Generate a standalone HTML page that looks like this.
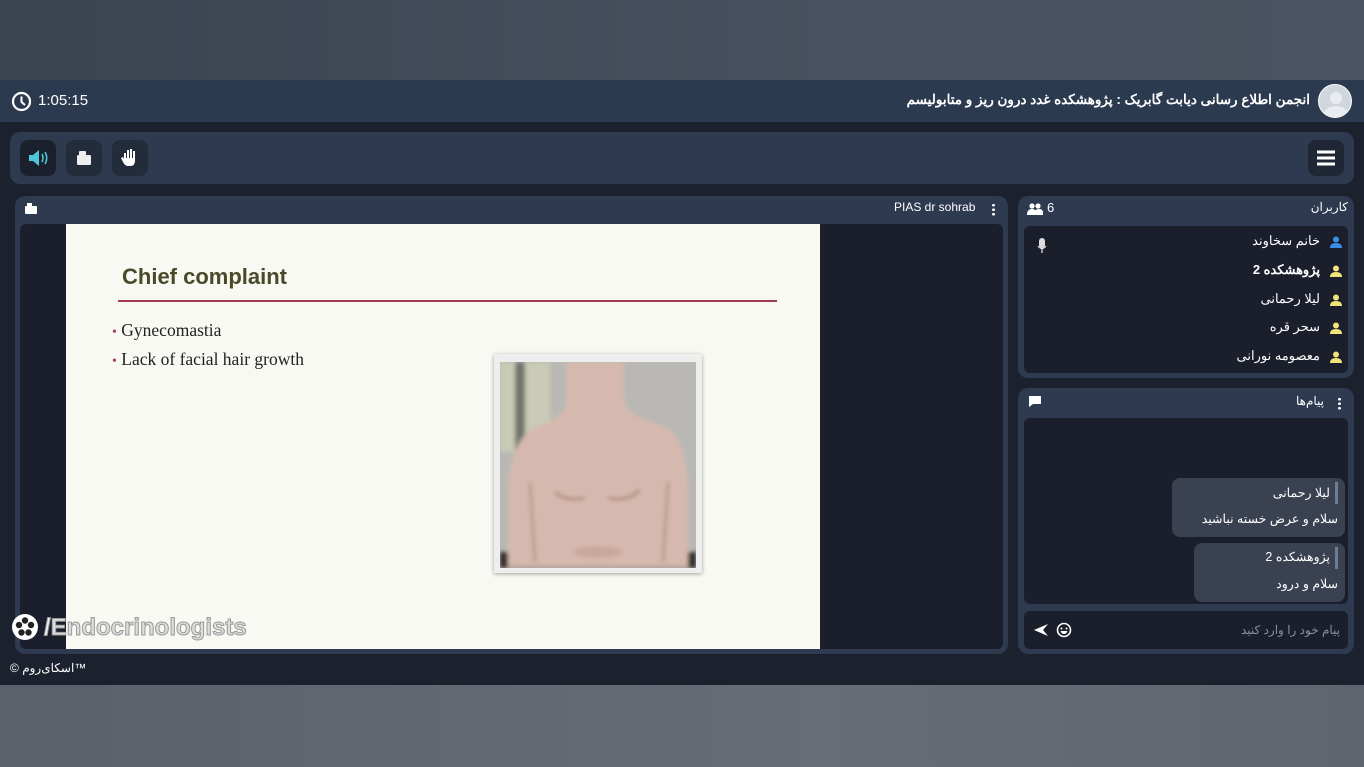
<!DOCTYPE html>
<html><head><meta charset="utf-8"><style>
*{margin:0;padding:0;box-sizing:border-box}
body{width:1364px;height:767px;overflow:hidden;background:#1b212d;font-family:"Liberation Sans","Noto Sans CJK SC",sans-serif;position:relative;color:#fff}
.a{position:absolute}
.top{left:0;top:0;width:1364px;height:80px;background:linear-gradient(90deg,#3a4350,#48515f 60%,#4a5361)}
.bot{left:0;top:685px;width:1364px;height:82px;background:linear-gradient(90deg,#5b616b,#676c75 60%,#5f656e)}
.hdr{left:0;top:80px;width:1364px;height:42px;background:#2c3a50}
.panel{background:#2d3a50;border-radius:10px}
.inner{background:#1a1f2b;border-radius:6px}
.btn{width:36px;height:36px;border-radius:8px;background:#232c3b;top:140px}
.rtl{direction:rtl;text-align:right}
.u{font-size:13px;right:44px}
.ui{right:22px;width:12px;height:12px}
.bub{background:#3a4150;border-radius:8px;direction:rtl}
</style></head><body>
<div class="a top"></div>
<div class="a bot"></div>
<div class="a hdr"></div>
<svg class="a" style="left:11px;top:91px" width="21" height="21" viewBox="0 0 21 21"><circle cx="10.5" cy="10.5" r="8.5" fill="none" stroke="#fff" stroke-width="2.2"/><path d="M10.5 5.5v5.5l3.5 3" fill="none" stroke="#fff" stroke-width="2"/></svg>
<div class="a" style="left:38px;top:92px;font-size:15px">1:05:15</div>
<div class="a rtl" style="right:54px;top:92px;font-size:13.5px;font-weight:bold;white-space:nowrap">انجمن اطلاع رسانی دیابت گابریک : پژوهشکده غدد درون ریز و متابولیسم</div>
<div class="a" style="left:1318px;top:84px;width:34px;height:34px;border-radius:50%;background:#cfd6de;border:1px solid #fff;overflow:hidden"><div class="a" style="left:11px;top:7px;width:12px;height:12px;border-radius:50%;background:#e8ecf0"></div><div class="a" style="left:5px;top:21px;width:24px;height:16px;border-radius:50%;background:#e8ecf0"></div></div>

<div class="a panel" style="left:10px;top:132px;width:1344px;height:52px"></div>
<div class="a btn" style="left:20px;background:#1a212c"><svg width="36" height="36"><path d="M9 15h4l6-5v16l-6-5H9z" fill="#4fc6d8"/><path d="M22 14q2 4 0 8M25 12q3.5 6 0 12" stroke="#4fc6d8" stroke-width="1.6" fill="none"/></svg></div>
<div class="a btn" style="left:66px"><svg width="36" height="36"><rect x="11" y="15" width="14" height="10" rx="1.5" fill="#eee"/><rect x="13" y="11" width="7" height="5" rx="1" fill="#eee"/></svg></div>
<div class="a btn" style="left:112px"><svg width="36" height="36"><path d="M12 19v-6h2v5h1v-8h2v8h1v-9h2v9h1v-7h2v10q0 5-5 5h-2q-3 0-5-4l-2-4 2-1z" fill="#fff"/></svg></div>
<div class="a btn" style="left:1308px;background:#1f2735"><svg width="36" height="36"><path d="M9 12h18M9 18h18M9 24h18" stroke="#fff" stroke-width="3"/></svg></div>

<div class="a panel" style="left:15px;top:196px;width:993px;height:458px"></div>
<svg class="a" style="left:24px;top:201px" width="14" height="14"><rect x="1" y="5" width="12" height="8" rx="1" fill="#fff"/><rect x="3" y="2" width="5" height="4" fill="#fff"/></svg>
<div class="a" style="left:894px;top:200px;font-size:12px">PIAS dr sohrab</div>
<div class="a" style="left:992px;top:203px;width:3px;height:13px;background:radial-gradient(circle,#fff 1.3px,transparent 1.5px) 0 0/3px 4.5px"></div>
<div class="a inner" style="left:20px;top:224px;width:983px;height:425px"></div>
<div class="a" style="left:66px;top:224px;width:754px;height:425px;background:#f9f9f3">
 <div class="a" style="left:56px;top:40px;font-size:22px;font-weight:bold;color:#4a4a2a">Chief complaint</div>
 <div class="a" style="left:52px;top:76px;width:659px;height:2px;background:#a23c55"></div>
 <div class="a" style="left:46px;top:93px;font-family:'Liberation Serif',serif;font-size:17.5px;color:#222;line-height:27px;white-space:nowrap"><span style="color:#a23c55;font-size:14px">•</span>&nbsp;Gynecomastia<br><span style="color:#a23c55;font-size:14px">•</span>&nbsp;Lack of facial hair growth</div>
 <div class="a" style="left:428px;top:130px;width:208px;height:219px;background:#eee;box-shadow:0 1px 4px rgba(0,0,0,.35)">
  <svg class="a" style="left:6px;top:8px" width="196" height="206" viewBox="0 0 196 206"><defs><filter id="b"><feGaussianBlur stdDeviation="2"/></filter></defs><rect width="196" height="206" fill="#b9b8b5"/><g filter="url(#b)"><rect x="0" y="0" width="50" height="90" fill="#c9cbb6"/><rect x="15" y="0" width="10" height="90" fill="#6f756c"/><rect x="0" y="190" width="196" height="16" fill="#2a2727"/><path d="M66 0h58v35q0 15 20 22l20 8q22 10 24 60v80H8v-80q4-50 28-60l18-8q14-8 12-22z" fill="#d6b9ae"/><path d="M55 130q10 10 30 6M108 136q20 4 32-8" stroke="#9a6d60" stroke-width="2" fill="none"/><path d="M30 120l5 80M168 120l-5 80" stroke="#b99587" stroke-width="3" fill="none"/><ellipse cx="98" cy="190" rx="26" ry="6" fill="#c9a89c"/></g></svg>
 </div>
</div>
<svg class="a" style="left:11px;top:613px" width="28" height="28"><circle cx="14" cy="14" r="13" fill="#fff"/><g fill="#222"><circle cx="14" cy="7.5" r="3.2"/><circle cx="20" cy="12" r="3.2"/><circle cx="17.5" cy="19.5" r="3.2"/><circle cx="10.5" cy="19.5" r="3.2"/><circle cx="8" cy="12" r="3.2"/></g></svg>
<div class="a" style="left:44px;top:614px;font-size:24px;font-weight:bold;color:#f2f2f2;-webkit-text-stroke:1px #999">/<span style="color:#ddd">Endocrinologists</span></div>
<div class="a" style="left:10px;top:661px;font-size:12px;white-space:nowrap;direction:ltr">© <bdi dir="rtl">اسکای‌روم</bdi>™</div>

<div class="a panel" style="left:1018px;top:196px;width:336px;height:182px"></div>
<svg class="a" style="left:1027px;top:203px" width="16" height="12"><circle cx="5" cy="3" r="2.6" fill="#fff"/><circle cx="11" cy="3" r="2.6" fill="#fff"/><path d="M0 12q0-6 5-6t5 6zM7 12q0-6 5-6t4 6z" fill="#fff"/></svg>
<div class="a" style="left:1047px;top:200px;font-size:13px">6</div>
<div class="a rtl" style="right:16px;top:200px;font-size:12px">کاربران</div>
<div class="a inner" style="left:1024px;top:226px;width:324px;height:147px"></div>
<svg class="a" style="left:1037px;top:238px" width="10" height="16"><rect x="2" y="0" width="6" height="10" rx="3" fill="#ddd"/><path d="M1 8q4 5 8 0M5 11v4" stroke="#ddd" stroke-width="1.3" fill="none"/></svg>
<div class="a rtl u" style="top:233px">خانم سخاوند</div>
<div class="a rtl u" style="top:262px;font-weight:bold">پژوهشکده 2</div>
<div class="a rtl u" style="top:291px">لیلا رحمانی</div>
<div class="a rtl u" style="top:319px">سحر قره</div>
<div class="a rtl u" style="top:348px">معصومه نورانی</div>
<svg class="a ui" style="top:236px" viewBox="0 0 12 12"><circle cx="6" cy="3.5" r="3" fill="#3a8ee6"/><path d="M0 12q0-5 6-5t6 5z" fill="#3a8ee6"/></svg>
<svg class="a ui" style="top:265px" viewBox="0 0 12 12"><circle cx="6" cy="3.5" r="3" fill="#f2e27a"/><path d="M0 12q0-5 6-5t6 5z" fill="#f2e27a"/></svg>
<svg class="a ui" style="top:294px" viewBox="0 0 12 12"><circle cx="6" cy="3.5" r="3" fill="#f2e27a"/><path d="M0 12q0-5 6-5t6 5z" fill="#f2e27a"/></svg>
<svg class="a ui" style="top:322px" viewBox="0 0 12 12"><circle cx="6" cy="3.5" r="3" fill="#f2e27a"/><path d="M0 12q0-5 6-5t6 5z" fill="#f2e27a"/></svg>
<svg class="a ui" style="top:351px" viewBox="0 0 12 12"><circle cx="6" cy="3.5" r="3" fill="#f2e27a"/><path d="M0 12q0-5 6-5t6 5z" fill="#f2e27a"/></svg>

<div class="a panel" style="left:1018px;top:388px;width:336px;height:266px"></div>
<svg class="a" style="left:1028px;top:395px" width="14" height="13"><path d="M1 1h12v8H5l-4 3z" fill="#fff"/></svg>
<div class="a rtl" style="right:40px;top:394px;font-size:12px">پیام‌ها</div>
<div class="a" style="left:1338px;top:397px;width:3px;height:13px;background:radial-gradient(circle,#fff 1.3px,transparent 1.5px) 0 0/3px 4.5px"></div>
<div class="a inner" style="left:1024px;top:418px;width:324px;height:186px"></div>
<div class="a bub" style="left:1172px;top:478px;width:173px;height:59px"></div>
<div class="a" style="left:1335px;top:482px;width:3px;height:22px;background:#6c7d96"></div>
<div class="a rtl" style="right:34px;top:485px;font-size:12.5px">لیلا رحمانی</div>
<div class="a rtl" style="right:26px;top:511px;font-size:12.5px">سلام و عرض خسته نباشید</div>
<div class="a bub" style="left:1194px;top:543px;width:151px;height:59px"></div>
<div class="a" style="left:1335px;top:547px;width:3px;height:22px;background:#6c7d96"></div>
<div class="a rtl" style="right:34px;top:549px;font-size:12.5px">پژوهشکده 2</div>
<div class="a rtl" style="right:26px;top:576px;font-size:12.5px">سلام و درود</div>
<div class="a inner" style="left:1024px;top:611px;width:324px;height:38px"></div>
<div class="a rtl" style="right:24px;top:623px;font-size:12px;color:#8a909a">پیام خود را وارد کنید</div>
<svg class="a" style="left:1033px;top:623px" width="16" height="14"><path d="M1 7L15 1 10 7l5 6z" fill="#fff"/></svg>
<svg class="a" style="left:1056px;top:622px" width="16" height="16"><circle cx="8" cy="8" r="6.5" fill="none" stroke="#fff" stroke-width="1.6"/><circle cx="5.5" cy="6.5" r="1" fill="#fff"/><circle cx="10.5" cy="6.5" r="1" fill="#fff"/><path d="M4.5 9h7q-1 3-3.5 3T4.5 9z" fill="#fff"/></svg>
</body></html>
